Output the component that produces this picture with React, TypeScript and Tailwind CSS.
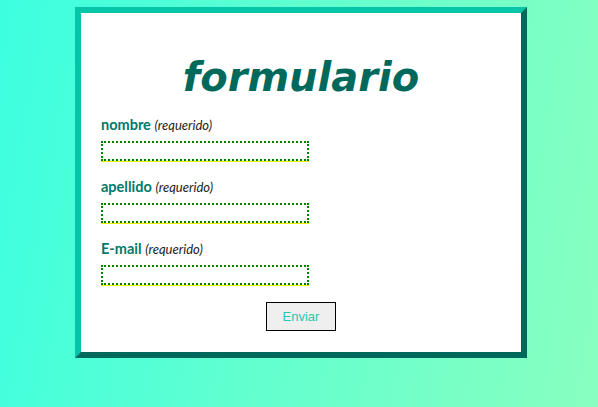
import React from 'react';

const fields = [
    { id: 'nombre', label: 'nombre' },
    { id: 'apellido', label: 'apellido' },
    { id: 'email', label: 'E-mail' },
];

export default function App() {
    return (
        <div className="min-h-screen bg-[linear-gradient(100deg,#3cffe0_0%,#60ffd0_45%,#88ffc0_100%)] pl-[75px] pt-[7px]">
            <form
                className="w-[452px] h-[351px] border-[6px] border-t-[#05c4a8] border-l-[#05c4a8] border-r-[#00695c] border-b-[#00695c] bg-white"
                onSubmit={(e) => e.preventDefault()}
            >
                <h1 className="mt-[41px] text-center text-[40px] leading-[46px] font-bold italic text-[#00695c] [font-family:'DejaVu_Sans',sans-serif]">
                    formulario
                </h1>

                <div className="pl-[20px] mt-[15px]">
                    {fields.map((f, i) => (
                        <div key={f.id} className={i > 0 ? 'mt-[16px]' : ''}>
                            <label htmlFor={f.id} className="block h-[20px] leading-[20px] text-[14.5px] [font-family:Lato,sans-serif]">
                                <span className="font-bold text-[#00796b]">{f.label}</span>{' '}
                                <span className="italic text-[13px] text-[#222]">(requerido)</span>
                            </label>
                            <input
                                id={f.id}
                                type="text"
                                className="mt-[6px] block w-[208px] h-[20px] border-2 border-dotted border-[#008000] bg-white shadow-[0_1px_0_#e8f000] outline-none"
                            />
                        </div>
                    ))}
                </div>

                <div className="flex justify-center mt-[17px]">
                    <button
                        type="submit"
                        className="w-[70px] h-[29px] border border-black bg-[#efefef] text-[13px] text-[#26c9a8] [font-family:'Liberation_Sans',Arial,sans-serif]"
                    >
                        Enviar
                    </button>
                </div>
            </form>
        </div>
    );
}
